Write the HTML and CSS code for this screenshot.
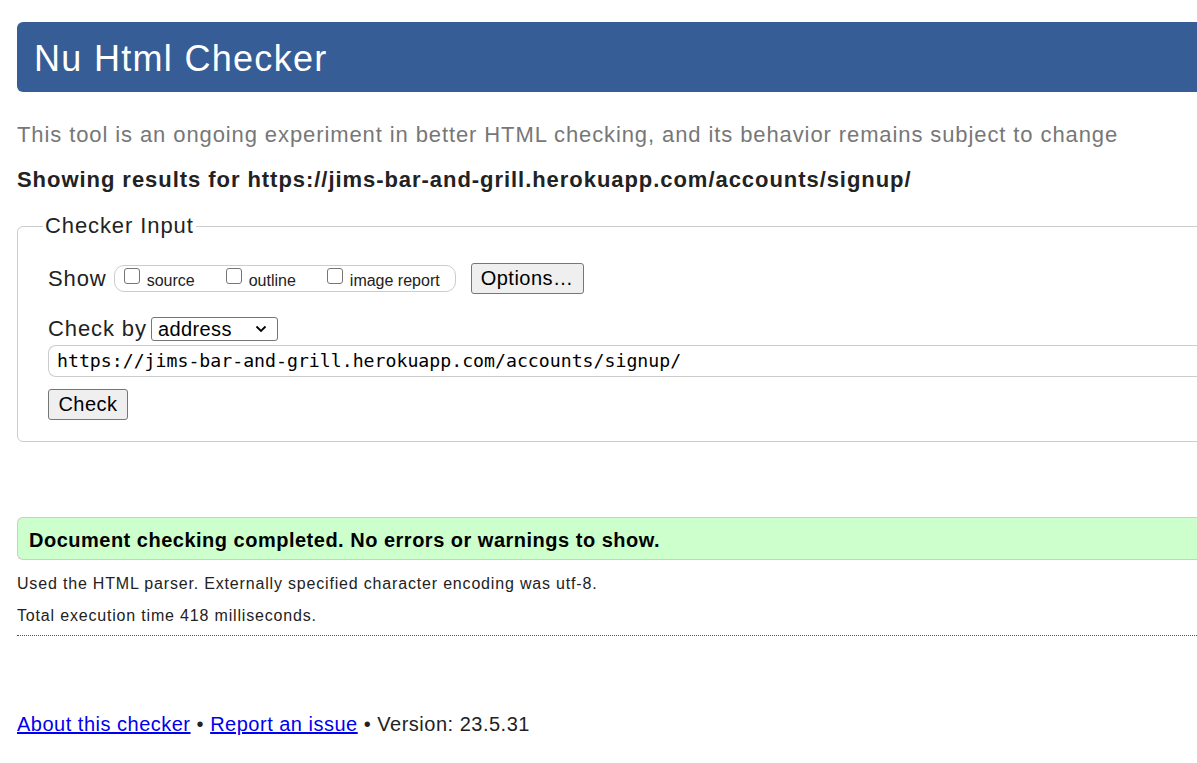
FILE: index.html
```html
<!DOCTYPE html>
<html lang="en">
<head>
<meta charset="utf-8">
<title>Nu Html Checker</title>
<link rel="stylesheet" href="styles.css">
</head>
<body>
<div class="page">
  <h1 class="title">Nu Html Checker</h1>
  <p class="subtitle">This tool is an ongoing experiment in better HTML checking, and its behavior remains subject to change</p>
  <p class="showing">Showing results for https://jims-bar-and-grill.herokuapp.com/accounts/signup/</p>
  <fieldset class="input-box">
    <legend class="legend">Checker Input</legend>
    <div class="row row-show">
      <span class="label">Show</span>
      <span class="checks">
        <label class="check"><input type="checkbox" class="cb"><span>source</span></label>
        <label class="check"><input type="checkbox" class="cb"><span>outline</span></label>
        <label class="check"><input type="checkbox" class="cb"><span>image report</span></label>
      </span>
      <button class="btn btn-options" type="button">Options…</button>
    </div>
    <div class="row row-by">
      <span class="label">Check by</span>
      <span class="select">
        <span>address</span>
        <svg class="chev" width="12" height="8" viewBox="0 0 12 8"><path d="M1.5 1.5 L6 6 L10.5 1.5" fill="none" stroke="#000" stroke-width="1.8"/></svg>
      </span>
    </div>
    <div class="url">https://jims-bar-and-grill.herokuapp.com/accounts/signup/</div>
    <button class="btn btn-check" type="button">Check</button>
  </fieldset>
  <div class="success">Document checking completed. No errors or warnings to show.</div>
  <p class="details">Used the HTML parser. Externally specified character encoding was utf-8.</p>
  <p class="details details-2">Total execution time 418 milliseconds.</p>
  <div class="divider"></div>
  <p class="footer"><a href="#">About this checker</a> • <a href="#">Report an issue</a> • Version: 23.5.31</p>
</div>
</body>
</html>
```
FILE: styles.css
```css
html, body {
  margin: 0;
  padding: 0;
  overflow: hidden;
  background: #fff;
}
body {
  font-family: "Liberation Sans", Arial, sans-serif;
  color: #222;
}
.page {
  width: 1240px;
  padding: 22px 0 0 17px;
}
.title {
  margin: 0;
  height: 70px;
  box-sizing: border-box;
  line-height: 70px;
  padding: 2px 17px 0 17px;
  background: #365d95;
  color: #fff;
  font-size: 36px;
  letter-spacing: 1.3px;
  font-weight: normal;
  border-radius: 6px 0 0 6px;
}
.subtitle {
  margin: 30px 0 0 0;
  font-size: 22px;
  letter-spacing: 0.9px;
  line-height: 26px;
  color: #777;
}
.showing {
  margin: 20px 0 0 0;
  font-size: 22px;
  letter-spacing: 0.95px;
  line-height: 24px;
  font-weight: bold;
  color: #222;
}
.input-box {
  margin: 21px 0 0 0;
  padding: 0 30px 21px 30px;
  border: 1px solid #ccc;
  border-radius: 6px 0 0 6px;
}
.legend {
  margin-left: -5px;
  padding: 0 2px;
  font-size: 22px;
  letter-spacing: 0.9px;
  line-height: 26px;
  color: #222;
}
.row {
  display: flex;
  align-items: center;
}
.row-show {
  margin-top: 24px;
  height: 31px;
}
.label {
  font-size: 22px;
  letter-spacing: 0.9px;
  line-height: 26px;
  color: #222;
}
.checks {
  display: flex;
  align-items: center;
  margin-left: 7px;
  height: 27px;
  width: 342px;
  box-sizing: border-box;
  border: 1px solid #ccc;
  border-radius: 10px;
  padding-left: 9px;
}
.check {
  display: flex;
  align-items: center;
  font-size: 16px;
  line-height: 20px;
  margin-right: 31px;
}
.check:last-child {
  margin-right: 0;
}
.cb {
  appearance: none;
  -webkit-appearance: none;
  width: 16px;
  height: 16px;
  margin: 0 7px 0 0;
  border: 1px solid #767676;
  border-radius: 3px;
  background: #fff;
  position: relative;
  top: -3px;
}
.check span {
  position: relative;
  top: 2px;
}
.btn {
  font-family: "Liberation Sans", Arial, sans-serif;
  font-size: 20px;
  letter-spacing: 0.5px;
  color: #000;
  background: #efefef;
  border: 1px solid #767676;
  border-radius: 3px;
  padding: 0;
  height: 31px;
}
.btn-options {
  margin-left: 15px;
  width: 113px;
}
.row-by {
  margin-top: 22px;
  height: 26px;
}
.select {
  display: flex;
  align-items: center;
  justify-content: space-between;
  box-sizing: border-box;
  margin-left: 4px;
  width: 127px;
  height: 24px;
  border: 1px solid #767676;
  border-radius: 3px;
  padding: 0 10px 0 6px;
  font-size: 20px;
  letter-spacing: 0.4px;
  color: #000;
}
.url {
  margin-top: 3px;
  height: 32px;
  box-sizing: border-box;
  border: 1px solid #ccc;
  border-right: none;
  border-radius: 8px 0 0 8px;
  padding: 0 0 0 8px;
  font-family: "DejaVu Sans Mono", "Liberation Mono", monospace;
  font-size: 18.2px;
  line-height: 30px;
  color: #000;
}
.btn-check {
  display: block;
  margin-top: 12px;
  width: 80px;
}
.success {
  margin-top: 75px;
  height: 43px;
  box-sizing: border-box;
  border: 1px solid #ccc;
  border-right: none;
  border-radius: 6px 0 0 6px;
  background: #ccffcc;
  padding: 3px 0 0 11px;
  font-size: 20px;
  letter-spacing: 0.5px;
  line-height: 38px;
  font-weight: bold;
  color: #000;
}
.details {
  margin: 14px 0 0 0;
  font-size: 16px;
  letter-spacing: 0.82px;
  line-height: 20px;
  color: #222;
}
.details-2 {
  margin-top: 12px;
}
.divider {
  margin-top: 9px;
  border-top: 1px dotted #555;
}
.footer {
  margin: 76px 0 0 0;
  font-size: 20px;
  letter-spacing: 0.5px;
  line-height: 24px;
  color: #222;
}
.footer a {
  color: #0000ee;
}
```
